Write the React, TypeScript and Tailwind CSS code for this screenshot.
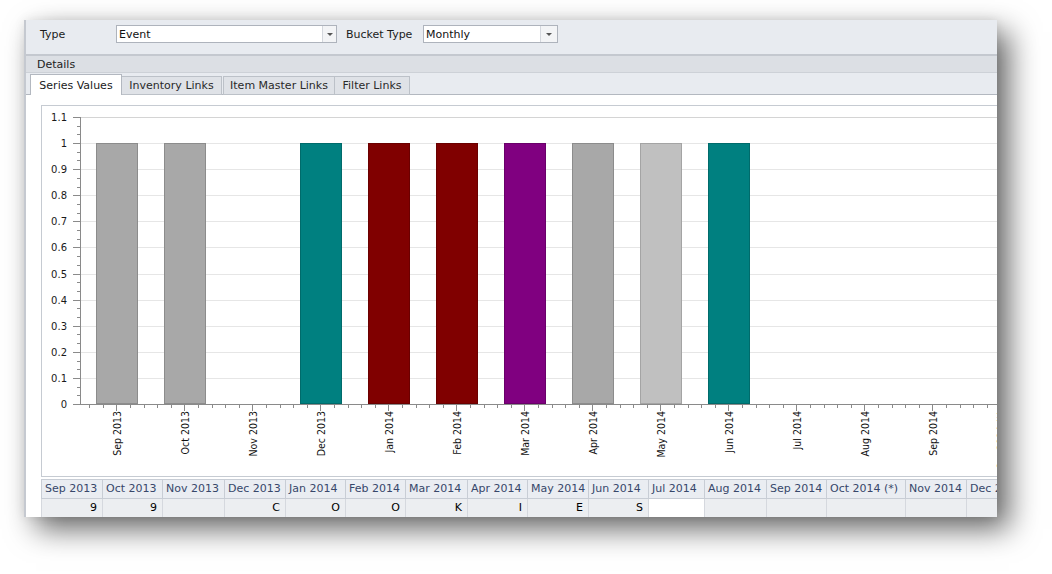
import React from "react";

const cols = [
  { label: "Sep 2013", value: "9", w: "w-[61px]" },
  { label: "Oct 2013", value: "9", w: "w-[60px]" },
  { label: "Nov 2013", value: "", w: "w-[62px]" },
  { label: "Dec 2013", value: "C", w: "w-[61px]" },
  { label: "Jan 2014", value: "O", w: "w-[60px]" },
  { label: "Feb 2014", value: "O", w: "w-[60px]" },
  { label: "Mar 2014", value: "K", w: "w-[62px]" },
  { label: "Apr 2014", value: "I", w: "w-[60px]" },
  { label: "May 2014", value: "E", w: "w-[61px]" },
  { label: "Jun 2014", value: "S", w: "w-[60px]" },
  { label: "Jul 2014", value: "", w: "w-[56px]", blank: true },
  { label: "Aug 2014", value: "", w: "w-[62px]" },
  { label: "Sep 2014", value: "", w: "w-[60px]" },
  { label: "Oct 2014 (*)", value: "", w: "w-[79px]" },
  { label: "Nov 2014", value: "", w: "w-[61px]" },
  { label: "Dec 2014", value: "", w: "w-[60px]" },
];

// fill / stroke for each month bar, null = no value
const bars: ([string, string] | null)[] = [
  ["#a8a8a8", "#8c8c8c"],
  ["#a8a8a8", "#8c8c8c"],
  null,
  ["#008080", "#006b6b"],
  ["#800000", "#6a0000"],
  ["#800000", "#6a0000"],
  ["#800080", "#6a006a"],
  ["#a8a8a8", "#8c8c8c"],
  ["#c0c0c0", "#a4a4a4"],
  ["#008080", "#006b6b"],
  null,
  null,
  null,
  null,
];

const axisLabels = [
  "Sep 2013",
  "Oct 2013",
  "Nov 2013",
  "Dec 2013",
  "Jan 2014",
  "Feb 2014",
  "Mar 2014",
  "Apr 2014",
  "May 2014",
  "Jun 2014",
  "Jul 2014",
  "Aug 2014",
  "Sep 2014",
  "Oct 2014 (*)",
];

function Combo({
  value,
  width,
  btn,
}: {
  value: string;
  width: string;
  btn: string;
}) {
  return (
    <div className={`flex h-[18px] border border-[#aeb3bc] bg-white ${width}`}>
      <div className="flex-1 pl-[2px] pt-[1px] leading-[16px] text-[#111]">
        {value}
      </div>
      <div
        className={`flex items-center justify-center border-l border-[#d4d7dd] bg-[#f3f4f6] ${btn}`}
      >
        <svg width="6" height="3" viewBox="0 0 6 3">
          <path d="M0 0h6L3 3z" fill="#555" />
        </svg>
      </div>
    </div>
  );
}

function Chart() {
  const y0 = 404;
  const step = 26.09;
  const yAt = (i: number) => Math.round(y0 - i * step);
  const cx = (k: number) => 116.5 + 68 * k;

  return (
    <svg
      width="958"
      height="370"
      viewBox="42 106 958 370"
      className="block"
      shapeRendering="crispEdges"
    >
      {/* horizontal grid */}
      {Array.from({ length: 11 }, (_, i) => i + 1).map((i) => (
        <line
          key={i}
          x1={80}
          x2={1000}
          y1={yAt(i) + 0.5}
          y2={yAt(i) + 0.5}
          stroke={i === 11 ? "#d4d4d4" : "#e6e6e6"}
        />
      ))}

      {/* bars */}
      {bars.map((b, k) =>
        b ? (
          <rect
            key={k}
            x={cx(k) - 20.5}
            y={143.5}
            width={41}
            height={260}
            fill={b[0]}
            stroke={b[1]}
          />
        ) : null,
      )}

      {/* y axis */}
      <line x1={80.5} x2={80.5} y1={117} y2={405} stroke="#8a8a8a" />
      {Array.from({ length: 12 }, (_, i) => i).map((i) => (
        <g key={i}>
          <line
            x1={73}
            x2={80}
            y1={yAt(i) + 0.5}
            y2={yAt(i) + 0.5}
            stroke="#8a8a8a"
          />
          <text
            x={67}
            y={yAt(i) + 4}
            textAnchor="end"
            fontSize="10"
            fontFamily="DejaVu Sans, sans-serif"
            fill="#1a1a1a"
            shapeRendering="auto"
          >
            {i === 10 ? "1" : i === 11 ? "1.1" : String(i / 10)}
          </text>
          {i < 11 &&
            [1, 2].map((j) => (
              <line
                key={j}
                x1={77}
                x2={80}
                y1={Math.round(y0 - i * step - (j * step) / 3) + 0.5}
                y2={Math.round(y0 - i * step - (j * step) / 3) + 0.5}
                stroke="#8a8a8a"
              />
            ))}
        </g>
      ))}

      {/* x axis */}
      <line x1={80} x2={1000} y1={404.5} y2={404.5} stroke="#8a8a8a" />
      {[-2, -1].map((j) => (
        <line
          key={j}
          x1={Math.round(cx(0) + j * 13.6) + 0.5}
          x2={Math.round(cx(0) + j * 13.6) + 0.5}
          y1={405}
          y2={408}
          stroke="#8a8a8a"
        />
      ))}
      {axisLabels.map((label, k) => (
        <g key={label}>
          <line
            x1={Math.floor(cx(k)) + 0.5}
            x2={Math.floor(cx(k)) + 0.5}
            y1={405}
            y2={411}
            stroke="#8a8a8a"
          />
          {[1, 2, 3, 4].map((j) => (
            <line
              key={j}
              x1={Math.round(cx(k) + j * 13.6) + 0.5}
              x2={Math.round(cx(k) + j * 13.6) + 0.5}
              y1={405}
              y2={408}
              stroke="#8a8a8a"
            />
          ))}
          <text
            x={cx(k) + 4}
            y={411}
            transform={`rotate(-90 ${cx(k) + 4} 411)`}
            textAnchor="end"
            fontSize="10.5"
            fontFamily="DejaVu Sans Condensed, DejaVu Sans, sans-serif"
            fill="#111"
            shapeRendering="auto"
          >
            {label}
          </text>
        </g>
      ))}
    </svg>
  );
}

export default function App() {
  return (
    <div className="h-[574px] w-[1052px] overflow-hidden bg-white pl-[24px] pt-[20px] font-['DejaVu_Sans',sans-serif] text-[11px] text-[#1b1b1b]">
      <div className="flex h-[497px] w-[973px] flex-col overflow-hidden border-l-2 border-[#c5c9d0] bg-white shadow-[12px_12px_28px_rgba(0,0,0,0.6),0_0_10px_rgba(0,0,0,0.08)]">
        {/* filter row */}
        <div className="flex h-[36px] shrink-0 items-start border-b-2 border-[#c4c8cf] bg-[#e8ebf0] pl-[14px] pt-[5px]">
          <div className="w-[76px] pt-[1px] leading-[18px]">Type</div>
          <Combo value="Event" width="w-[221px]" btn="w-[14px]" />
          <div className="ml-[9px] w-[77px] pt-[1px] leading-[18px]">
            Bucket Type
          </div>
          <Combo value="Monthly" width="w-[135px]" btn="w-[17px]" />
        </div>

        {/* group header */}
        <div className="h-[17px] shrink-0 border-b border-[#cdd1d7] bg-[#dcdfe4] pl-[11px] pt-[1px] leading-[16px] text-[#222]">
          Details
        </div>

        {/* tabs */}
        <div className="flex h-[22px] shrink-0 items-end border-b border-[#b3b8c0] bg-[#e8ebf0] pl-[4px]">
          <div className="-mb-px flex h-[21px] w-[92px] items-center justify-center border border-b-0 border-[#b3b8c0] bg-white pt-[2px] text-[#1a1a1a]">
            Series Values
          </div>
          <div className="-mb-px flex h-[19px] w-[100px] items-center justify-center border border-l-0 border-[#bcc1c8] bg-[#dfe2e7] pt-[1px] text-[#2a2a2a]">
            Inventory Links
          </div>
          <div className="-mb-px ml-px flex h-[19px] w-[112px] items-center justify-center border border-[#bcc1c8] bg-[#dfe2e7] pt-[1px] text-[#2a2a2a]">
            Item Master Links
          </div>
          <div className="-mb-px flex h-[19px] w-[75px] items-center justify-center border border-l-0 border-[#bcc1c8] bg-[#dfe2e7] pt-[1px] text-[#2a2a2a]">
            Filter Links
          </div>
        </div>

        {/* content */}
        <div className="flex-1 bg-white pl-[15px] pt-[10px]">
          <div className="h-[372px] w-[960px] border border-[#c6cbd2]">
            <Chart />
          </div>

          <div className="mt-[2px] w-[1000px]">
            <div className="flex border-l border-t border-[#c8cdd5]">
              {cols.map((c) => (
                <div
                  key={c.label}
                  className={`flex h-[19px] shrink-0 items-center whitespace-nowrap border-b border-r border-[#c8cdd5] bg-[#eaedf2] pl-[3px] pt-[1px] text-[#37476a] ${c.w}`}
                >
                  {c.label}
                </div>
              ))}
            </div>
            <div className="flex border-l border-[#d5d8de]">
              {cols.map((c) => (
                <div
                  key={c.label}
                  className={`flex h-[19px] shrink-0 items-center justify-end border-b border-r border-[#d5d8de] pr-[5px] pt-[1px] text-[#000] ${c.w} ${c.blank ? "bg-white" : "bg-[#eceef1]"}`}
                >
                  {c.value}
                </div>
              ))}
            </div>
          </div>
        </div>
      </div>
    </div>
  );
}
